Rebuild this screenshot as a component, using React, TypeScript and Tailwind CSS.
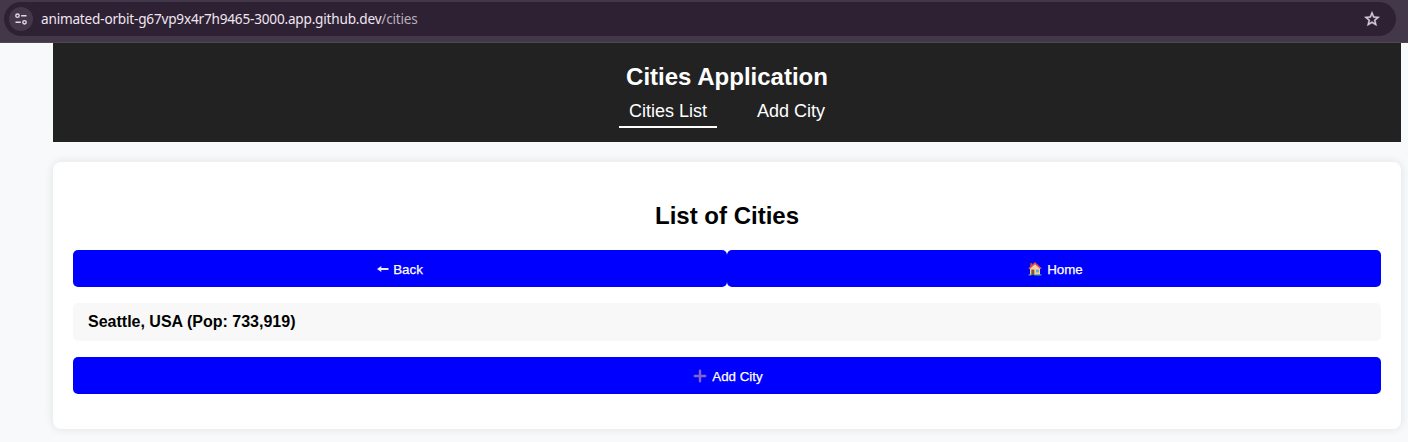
import React from "react";

function BrowserBar() {
  return (
    <div className="flex h-[43px] items-start border-b border-[#4b4a4d] bg-[#43384a] pt-[2px] pr-3 pl-1">
      <div className="flex h-[34px] w-full items-center rounded-full bg-[#2e2133] pr-[15px] pl-[5px]">
        <div className="flex size-6 shrink-0 items-center justify-center rounded-full bg-[#43384a]">
          <svg width="14" height="14" viewBox="0 0 14 14" fill="none" stroke="#e4d9e6" strokeWidth="1.4">
            <circle cx="3.5" cy="3.7" r="1.7" />
            <path d="M7.2 3.7h5.3M1.5 10.3h5.3" />
            <circle cx="10.5" cy="10.3" r="1.7" />
          </svg>
        </div>
        <div className="ml-2 font-['Noto_Sans',sans-serif] text-[13.6px] leading-5 tracking-[-0.2px] whitespace-nowrap text-[#efe6f1]">
          <span>animated-orbit-g67vp9x4r7h9465-3000.app.github.dev</span>
          <span className="text-[#b8aebb]">/cities</span>
        </div>
        <svg className="ml-auto" width="18" height="18" viewBox="0 0 24 24" fill="#d9ccdc" stroke="#d9ccdc" strokeWidth="0.6">
          <path d="M22 9.24l-7.19-.62L12 2 9.19 8.63 2 9.24l5.46 4.73L5.82 21 12 17.27 18.18 21l-1.63-7.03L22 9.24zM12 15.4l-3.76 2.27 1-4.28-3.32-2.88 4.38-.38L12 6.1l1.71 4.04 4.38.38-3.32 2.88 1 4.28L12 15.4z" />
        </svg>
      </div>
    </div>
  );
}

function ActionButton({ icon, children }: { icon: React.ReactNode; children: React.ReactNode }) {
  return (
    <button className="flex h-[37px] flex-1 items-center justify-center rounded-[5px] bg-[#0000ff] pt-px text-[13.333px] leading-[15px] text-white">
      {icon}
      <span className="[-webkit-text-stroke:0.25px_white]">{children}</span>
    </button>
  );
}

const backIcon = (
  <svg className="mr-1" width="12" height="10" viewBox="0 0 12 10" fill="#eee8ff">
    <path d="M0 5l4.3-3v1.9H11.5v2.2H4.3V8z" />
  </svg>
);

const homeIcon = (
  <svg className="ml-[3px] mr-[5px]" width="14" height="14" viewBox="0 0 14 14">
    <path d="M2.3 1.2h1.9V5H2.3z" fill="#b25c4c" />
    <path d="M2 6.3L7 1.6l5 4.7V13H2z" fill="#f2cf9c" />
    <path d="M.8 6.8L7 1.1l6.2 5.7" fill="none" stroke="#e0474a" strokeWidth="1.5" />
    <path d="M3.3 7.6h3V13h-3z" fill="#80533f" />
    <path d="M8 7.6h2.8v2.8H8z" fill="#65a7dd" />
    <path d="M.6 12.2h2.7v1.3H.6zM6.3 12.2h7.1v1.3H6.3z" fill="#45b56d" />
  </svg>
);

const plusIcon = (
  <svg className="ml-[2px] mr-[5px]" width="14" height="14" viewBox="0 0 14 14" fill="none" stroke="#8264c8" strokeWidth="2.4">
    <path d="M7 1.8v10.4M1.8 7h10.4" strokeLinecap="round" />
  </svg>
);

export default function App() {
  return (
    <div className="h-[442px] overflow-hidden bg-[#f8f9fb] font-['Liberation_Sans',Arial,sans-serif] text-black">
      <BrowserBar />
      <div className="mr-[7px] ml-[53px]">
        <header className="h-[99px] bg-[#222222] pt-5 text-center text-white">
          <h1 className="text-2xl leading-7 font-bold">Cities Application</h1>
          <nav className="flex justify-center gap-[30px] text-[18px] leading-5">
            <a className="mt-[5px] h-[32px] border-b-2 border-white px-[10px] pt-[5px]">Cities List</a>
            <a className="mt-[5px] h-[32px] px-[10px] pt-[5px]">Add City</a>
          </nav>
        </header>
        <main className="mt-5 h-[267px] rounded-lg bg-white px-5 pt-10 shadow-[0_0_10px_rgba(0,0,0,0.1)]">
          <h2 className="text-center text-2xl leading-7 font-bold">List of Cities</h2>
          <div className="mt-5 flex">
            <ActionButton icon={backIcon}>Back</ActionButton>
            <ActionButton icon={homeIcon}>Home</ActionButton>
          </div>
          <ul className="my-4">
            <li className="flex h-[38px] items-center rounded-[5px] bg-[#f8f8f8] px-[15px] text-base leading-[18px] font-bold">
              Seattle, USA (Pop: 733,919)
            </li>
          </ul>
          <div className="flex">
            <ActionButton icon={plusIcon}>Add City</ActionButton>
          </div>
        </main>
      </div>
    </div>
  );
}
